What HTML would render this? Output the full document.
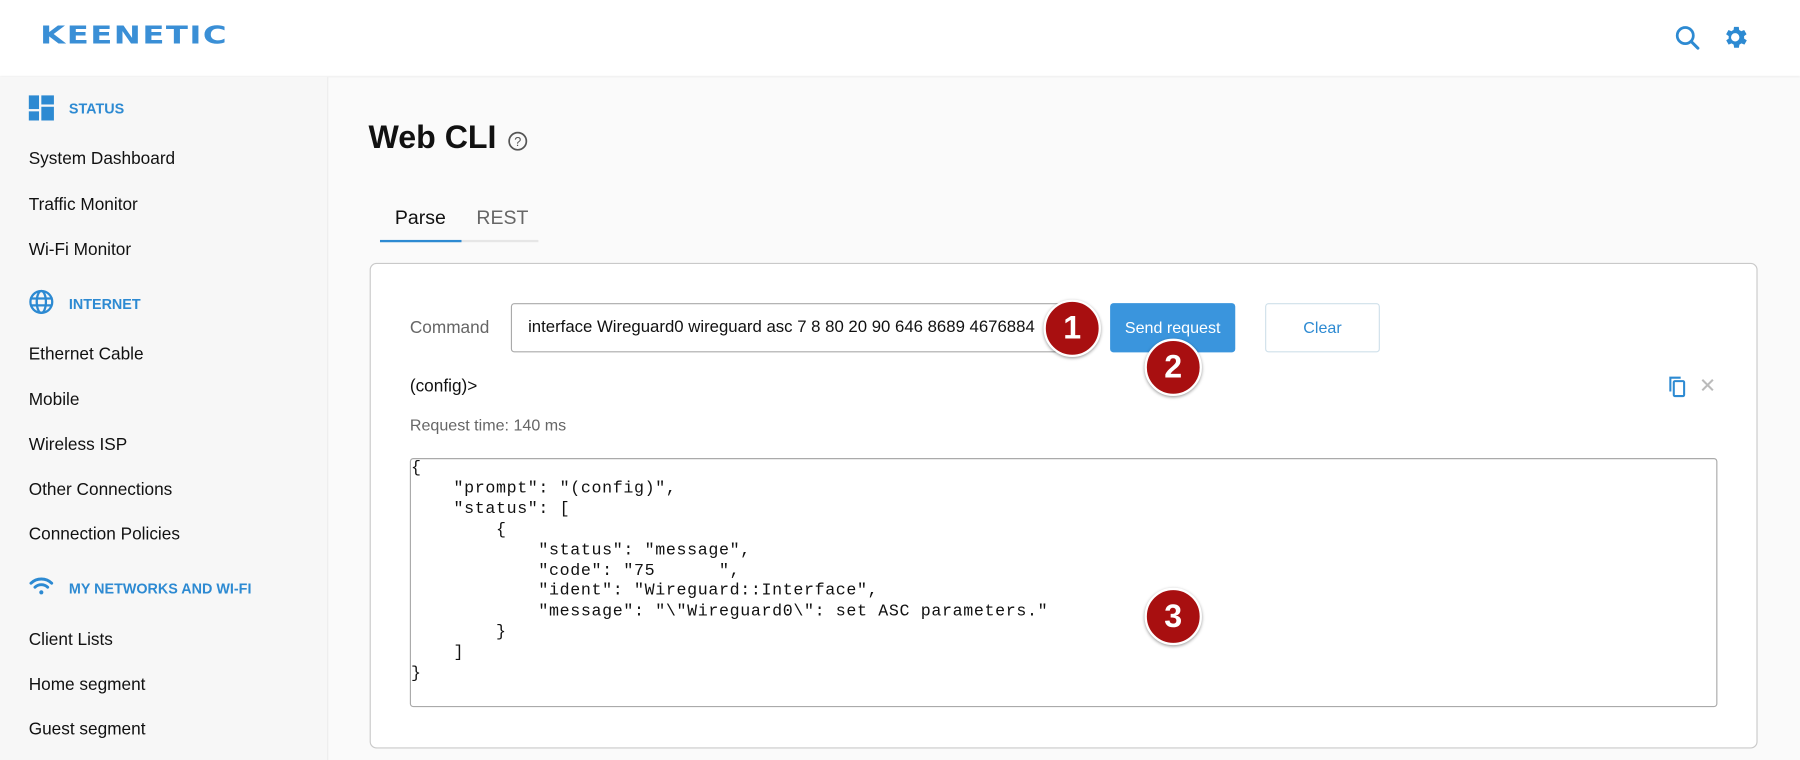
<!DOCTYPE html>
<html><head><meta charset="utf-8"><style>
html,body{margin:0;padding:0;width:1800px;height:760px;overflow:hidden;background:#fafafa;}
#w{position:absolute;left:0;top:0;width:1568px;height:662px;transform:scale(1.148);transform-origin:0 0;font-family:"Liberation Sans",sans-serif;color:#111;overflow:hidden;}
.a{position:absolute;white-space:nowrap;}
.hdr{left:0;top:0;width:1568px;height:66px;background:#fff;box-shadow:0 1px 2px rgba(0,0,0,.05);}
.side{left:0;top:67px;width:285px;height:600px;background:#f7f7f7;border-right:1px solid #ececec;}
.it{font-size:15px;left:25px;color:#111;}
.sec{font-size:12.5px;font-weight:bold;color:#2d8ad2;left:60px;}
.card{left:322px;top:229px;width:1207px;height:421px;background:#fff;border:1px solid #c9c9c9;border-radius:6px;}
.red{width:46px;height:46px;border-radius:50%;background:#a80f10;color:#fff;font-weight:bold;font-size:28px;text-align:center;line-height:46px;border:2px solid #fff;box-shadow:0 1px 3px rgba(0,0,0,.4);}
pre{margin:0;font-family:"Liberation Mono",monospace;font-size:14.5px;letter-spacing:0.55px;line-height:17.9px;color:#111;white-space:pre !important;}
</style></head><body><div id="w">
<div class="a hdr"></div>
<div class="a" style="left:35px;top:19px;font-size:22px;font-weight:900;color:#3a8fd6;letter-spacing:1px;transform:scaleX(1.28);transform-origin:0 0;font-family:'DejaVu Sans',sans-serif;">KEENETIC</div>
<svg class="a" style="left:1458px;top:21px" width="24" height="24" viewBox="0 0 24 24"><circle cx="10" cy="10" r="7" fill="none" stroke="#2d8ad2" stroke-width="2.4"/><path d="M15 15l6 6" stroke="#2d8ad2" stroke-width="2.6" stroke-linecap="round"/></svg>
<svg class="a" style="left:1499px;top:20px" width="25" height="25" viewBox="0 0 24 24"><path fill="#2d8ad2" d="M19.4 13a7.5 7.5 0 000-2l2.1-1.6-2-3.5-2.5 1a7 7 0 00-1.7-1L15 3.3h-4l-.4 2.6a7 7 0 00-1.7 1l-2.5-1-2 3.5L6.6 11a7.5 7.5 0 000 2l-2.1 1.6 2 3.5 2.5-1a7 7 0 001.7 1l.4 2.6h4l.4-2.6a7 7 0 001.7-1l2.5 1 2-3.5zM12 15.5a3.5 3.5 0 110-7 3.5 3.5 0 010 7z"/></svg>
<div class="a side"></div>
<svg class="a" style="left:25px;top:83px" width="22" height="22" viewBox="0 0 22 22" fill="#2d8ad2"><rect x="0" y="0" width="9" height="12"/><rect x="0" y="14" width="9" height="8"/><rect x="11" y="0" width="11" height="8"/><rect x="11" y="10" width="11" height="12"/></svg>
<div class="a sec" style="top:88px">STATUS</div>
<div class="a it" style="top:130px">System Dashboard</div>
<div class="a it" style="top:170px">Traffic Monitor</div>
<div class="a it" style="top:209px">Wi-Fi Monitor</div>
<svg class="a" style="left:25px;top:252px" width="22" height="22" viewBox="0 0 22 22" fill="none" stroke="#2d8ad2" stroke-width="2"><circle cx="11" cy="11" r="9.5"/><ellipse cx="11" cy="11" rx="4" ry="9.5"/><path d="M2 8h18M2 14h18"/></svg>
<div class="a sec" style="top:258px">INTERNET</div>
<div class="a it" style="top:300px">Ethernet Cable</div>
<div class="a it" style="top:340px">Mobile</div>
<div class="a it" style="top:379px">Wireless ISP</div>
<div class="a it" style="top:418px">Other Connections</div>
<div class="a it" style="top:457px">Connection Policies</div>
<svg class="a" style="left:25px;top:502px" width="22" height="18" viewBox="0 0 22 18" fill="none" stroke="#2d8ad2" stroke-width="2.6" stroke-linecap="round"><path d="M2 6a13 13 0 0118 0M5.5 9.5a8 8 0 0111 0"/><circle cx="11" cy="14" r="1.8" fill="#2d8ad2" stroke="none"/></svg>
<div class="a sec" style="top:506px">MY NETWORKS AND WI-FI</div>
<div class="a it" style="top:549px">Client Lists</div>
<div class="a it" style="top:588px">Home segment</div>
<div class="a it" style="top:627px">Guest segment</div>

<div class="a" style="left:321px;top:104px;font-size:28px;font-weight:bold;">Web CLI</div>
<svg class="a" style="left:442px;top:114px" width="18" height="18" viewBox="0 0 18 18"><circle cx="9" cy="9" r="7.5" fill="none" stroke="#555" stroke-width="1.5"/><text x="9" y="13" font-size="11" text-anchor="middle" fill="#555" font-family="Liberation Sans">?</text></svg>
<div class="a" style="left:344px;top:180px;font-size:17px;color:#111">Parse</div>
<div class="a" style="left:415px;top:180px;font-size:17px;color:#666">REST</div>
<div class="a" style="left:331px;top:209px;width:138px;height:2px;background:#e6e6e6"></div>
<div class="a" style="left:331px;top:209px;width:71px;height:2px;background:#2d8ad2"></div>

<div class="a card"></div>
<div class="a" style="left:357px;top:277px;font-size:15px;color:#666">Command</div>
<div class="a" style="left:445px;top:264px;width:478px;height:41px;border:1px solid #aaa;border-radius:3px;background:#fff;overflow:hidden"><span style="position:absolute;left:14px;top:12px;font-size:14.6px;">interface Wireguard0 wireguard asc 7 8 80 20 90 646 8689 4676884</span></div>
<div class="a" style="left:967px;top:264px;width:109px;height:43px;background:#3a95dd;border-radius:3px;color:#fff;font-size:14px;text-align:center;line-height:43px">Send request</div>
<div class="a" style="left:1102px;top:264px;width:98px;height:41px;border:1px solid #cfe0ea;border-radius:3px;color:#2d8ad2;font-size:14px;text-align:center;line-height:41px">Clear</div>
<div class="a" style="left:357px;top:328px;font-size:15px">(config)&gt;</div>
<svg class="a" style="left:1452px;top:327px" width="18" height="20" viewBox="0 0 18 20" fill="none" stroke="#2d8ad2" stroke-width="1.8"><path d="M3 14V2h9"/><rect x="6" y="5" width="9" height="13" rx="1"/></svg>
<div class="a" style="left:1480px;top:326px;font-size:18px;color:#bbb">✕</div>
<div class="a" style="left:357px;top:362px;font-size:14px;color:#666">Request time: 140 ms</div>
<div class="a" style="left:357px;top:399px;width:1137px;height:215px;border:1px solid #aaa;border-radius:3px;background:#fff"></div>
<pre class="a" style="left:358px;top:400px">{
    "prompt": "(config)",
    "status": [
        {
            "status": "message",
            "code": "75      ",
            "ident": "Wireguard::Interface",
            "message": "\"Wireguard0\": set ASC parameters."
        }
    ]
}</pre>
<div class="a red" style="left:909px;top:261px">1</div>
<div class="a red" style="left:997px;top:295px">2</div>
<div class="a red" style="left:997px;top:512px">3</div>
</div></body></html>
